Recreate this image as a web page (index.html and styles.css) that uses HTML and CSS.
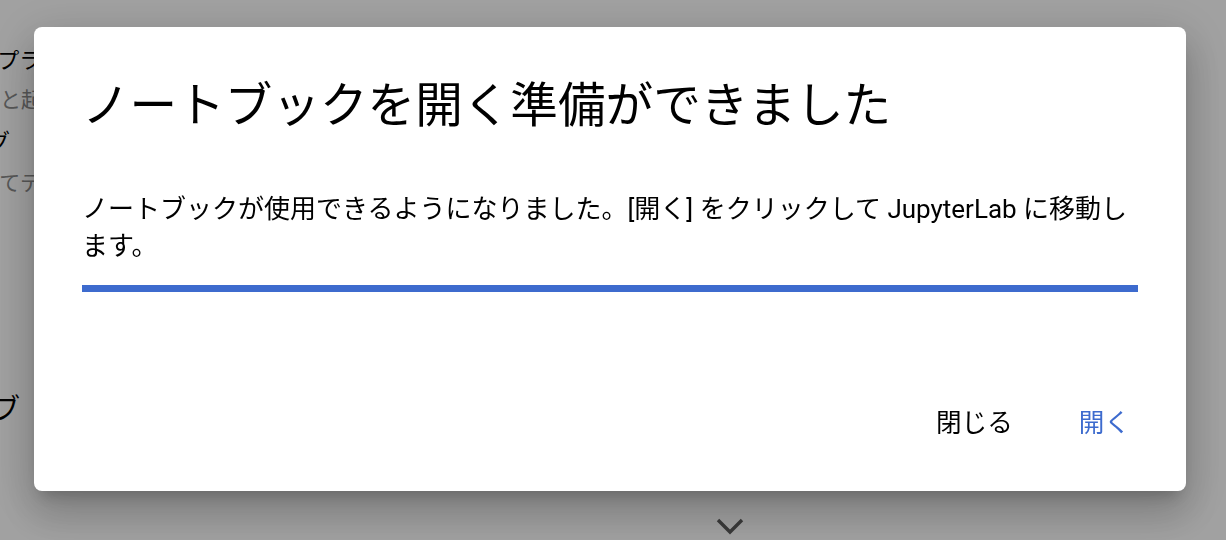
FILE: index.html
```html
<!DOCTYPE html>
<html lang="ja">
<head>
<meta charset="utf-8">
<title>ノートブックを開く準備ができました</title>
<link rel="stylesheet" href="styles.css">
</head>
<body>
<div class="page">
  <div class="page-lines">
    <div class="pl pl-title pl-a">テンプラ</div>
    <div class="pl pl-sub pl-b">ノと起</div>
    <div class="pl pl-title pl-c">ログ</div>
    <div class="pl pl-sub pl-d">してデ</div>
    <div class="pl pl-big pl-e">タブ</div>
  </div>
  <div class="page-chevron">
    <svg width="28" height="18" viewBox="0 0 28 18"><path d="M2 2 L14 14 L26 2" fill="none" stroke="#5c5c5c" stroke-width="3.4"/></svg>
  </div>
</div>
<div class="overlay">
  <div class="dialog" role="dialog">
    <h1 class="dialog-title">ノートブックを開く準備ができました</h1>
    <p class="dialog-text">ノートブックが使用できるようになりました。[開く] をクリックして JupyterLab に移動します。</p>
    <div class="progress"></div>
    <div class="dialog-actions">
      <button class="btn btn-close">閉じる</button>
      <button class="btn btn-open">開く</button>
    </div>
  </div>
</div>
</body>
</html>
```

FILE: styles.css
```css
html, body {
  margin: 0;
  padding: 0;
  width: 1226px;
  height: 540px;
  overflow: hidden;
  background: #fff;
  font-family: Roboto, "Noto Sans CJK JP", sans-serif;
}

.page {
  width: 1226px;
  height: 540px;
  display: flex;
  flex-direction: column;
}

.page-lines {
  display: flex;
  flex-direction: column;
  padding-top: 50px;
}

.pl {
  white-space: nowrap;
  line-height: 1;
}

.pl-title { font-size: 22px; color: #000; }
.pl-sub { font-size: 21px; color: #8a8a8a; }
.pl-big { font-size: 28px; color: #000; }

.pl-a { margin-left: -46px; }
.pl-b { margin-left: -21px; margin-top: 18px; }
.pl-c { margin-left: -34px; margin-top: 20px; }
.pl-d { margin-left: -21px; margin-top: 20px; }
.pl-e { margin-left: -36px; margin-top: 202px; }

.page-chevron {
  display: flex;
  justify-content: center;
  margin-top: auto;
  padding: 0 0 4px 234px;
}

.overlay {
  position: fixed;
  inset: 0;
  background: rgba(0, 0, 0, 0.37);
  display: flex;
  align-items: flex-start;
}

.dialog {
  margin: 27px 0 0 34px;
  width: 1152px;
  height: 464px;
  box-sizing: border-box;
  padding: 51px 48px 0;
  background: #fff;
  border-radius: 8px;
  box-shadow: 0 11px 15px -7px rgba(0,0,0,.2), 0 24px 38px 3px rgba(0,0,0,.14), 0 9px 46px 8px rgba(0,0,0,.12);
  display: flex;
  flex-direction: column;
}

.dialog-title {
  margin: 0;
  font-size: 47.6px;
  font-weight: 400;
  line-height: 56px;
  color: #000;
}

.dialog-text {
  margin: 57px 0 0;
  font-size: 26px;
  line-height: 37px;
  color: #000;
}

.progress {
  margin-top: 20px;
  height: 7px;
  background: #3d6bce;
}

.dialog-actions {
  display: flex;
  justify-content: flex-end;
  margin-top: auto;
  margin-right: -8px;
  margin-bottom: 50px;
  gap: 34px;
}

.btn {
  font-family: Roboto, "Noto Sans CJK JP", sans-serif;
  font-size: 25.6px;
  line-height: 36px;
  background: none;
  border: 0;
  padding: 0 16px;
  cursor: pointer;
}

.btn-close { color: #000; }
.btn-open { color: #3d6bce; }
```
